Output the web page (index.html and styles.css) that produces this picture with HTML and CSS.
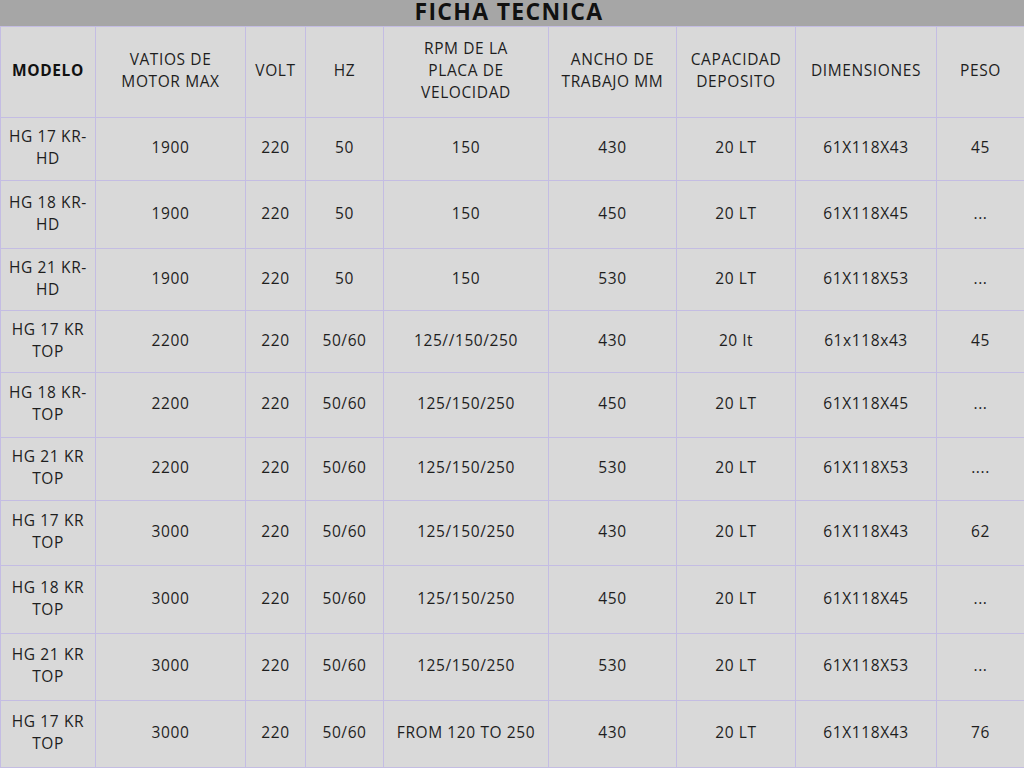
FILE: index.html
```html
<!DOCTYPE html>
<html lang="es">
<head>
<meta charset="utf-8">
<title>Ficha Tecnica</title>
<link rel="stylesheet" href="styles.css">
</head>
<body>
<div class="sheet">
  <h1 class="title">FICHA TECNICA</h1>
  <table class="spec">
    <colgroup>
      <col class="c-model"><col class="c-watt"><col class="c-volt"><col class="c-hz"><col class="c-rpm"><col class="c-width"><col class="c-cap"><col class="c-dim"><col class="c-peso">
    </colgroup>
    <thead>
      <tr>
        <th class="strong">MODELO</th>
        <th>VATIOS DE<br>MOTOR MAX</th>
        <th>VOLT</th>
        <th>HZ</th>
        <th>RPM DE LA<br>PLACA DE<br>VELOCIDAD</th>
        <th>ANCHO DE<br>TRABAJO MM</th>
        <th>CAPACIDAD<br>DEPOSITO</th>
        <th>DIMENSIONES</th>
        <th>PESO</th>
      </tr>
    </thead>
    <tbody>
      <tr><td>HG 17 KR-<br>HD</td><td>1900</td><td>220</td><td>50</td><td>150</td><td>430</td><td>20 LT</td><td>61X118X43</td><td>45</td></tr>
      <tr><td>HG 18 KR-<br>HD</td><td>1900</td><td>220</td><td>50</td><td>150</td><td>450</td><td>20 LT</td><td>61X118X45</td><td>...</td></tr>
      <tr><td>HG 21 KR-<br>HD</td><td>1900</td><td>220</td><td>50</td><td>150</td><td>530</td><td>20 LT</td><td>61X118X53</td><td>...</td></tr>
      <tr><td>HG 17 KR<br>TOP</td><td>2200</td><td>220</td><td>50/60</td><td>125//150/250</td><td>430</td><td>20 lt</td><td>61x118x43</td><td>45</td></tr>
      <tr><td>HG 18 KR-<br>TOP</td><td>2200</td><td>220</td><td>50/60</td><td>125/150/250</td><td>450</td><td>20 LT</td><td>61X118X45</td><td>...</td></tr>
      <tr><td>HG 21 KR<br>TOP</td><td>2200</td><td>220</td><td>50/60</td><td>125/150/250</td><td>530</td><td>20 LT</td><td>61X118X53</td><td>....</td></tr>
      <tr><td>HG 17 KR<br>TOP</td><td>3000</td><td>220</td><td>50/60</td><td>125/150/250</td><td>430</td><td>20 LT</td><td>61X118X43</td><td>62</td></tr>
      <tr><td>HG 18 KR<br>TOP</td><td>3000</td><td>220</td><td>50/60</td><td>125/150/250</td><td>450</td><td>20 LT</td><td>61X118X45</td><td>...</td></tr>
      <tr><td>HG 21 KR<br>TOP</td><td>3000</td><td>220</td><td>50/60</td><td>125/150/250</td><td>530</td><td>20 LT</td><td>61X118X53</td><td>...</td></tr>
      <tr><td>HG 17 KR<br>TOP</td><td>3000</td><td>220</td><td>50/60</td><td>FROM 120 TO 250</td><td>430</td><td>20 LT</td><td>61X118X43</td><td>76</td></tr>
    </tbody>
  </table>
</div>
</body>
</html>
```

FILE: styles.css
```css
html, body {
  margin: 0;
  padding: 0;
  background: #d9d9d9;
}

body {
  font-family: "Open Sans", "Liberation Sans", sans-serif;
  color: #1e1e1e;
}

.sheet {
  width: 1024px;
  height: 768px;
  overflow: hidden;
}

.title {
  margin: 0;
  height: 26px;
  background: #a6a6a6;
  font-size: 23px;
  line-height: 22px;
  font-weight: 700;
  text-align: center;
  color: #111;
  padding-right: 6px;
  letter-spacing: 1.3px;
}

.spec {
  width: 1024px;
  table-layout: fixed;
  border-collapse: collapse;
  background: #d9d9d9;
}

.c-model { width: 95px; }
.c-watt { width: 150px; }
.c-volt { width: 60px; }
.c-hz { width: 78px; }
.c-rpm { width: 165px; }
.c-width { width: 128px; }
.c-cap { width: 119px; }
.c-dim { width: 141px; }
.c-peso { width: 88px; }

.spec th,
.spec td {
  border: 1px solid #c4bde3;
  padding: 0 2px 4px;
  text-align: center;
  vertical-align: middle;
  font-size: 15.5px;
  line-height: 22px;
  font-weight: 400;
  letter-spacing: 0.6px;
}

.spec th.strong {
  font-weight: 700;
  color: #111;
}

.spec thead tr { height: 91px; }
.spec tbody tr:nth-child(1) { height: 63px; }
.spec tbody tr:nth-child(2) { height: 68px; }
.spec tbody tr:nth-child(3) { height: 62px; }
.spec tbody tr:nth-child(4) { height: 62px; }
.spec tbody tr:nth-child(5) { height: 65px; }
.spec tbody tr:nth-child(6) { height: 63px; }
.spec tbody tr:nth-child(7) { height: 65px; }
.spec tbody tr:nth-child(8) { height: 68px; }
.spec tbody tr:nth-child(9) { height: 67px; }
.spec tbody tr:nth-child(10) { height: 67px; }
```
